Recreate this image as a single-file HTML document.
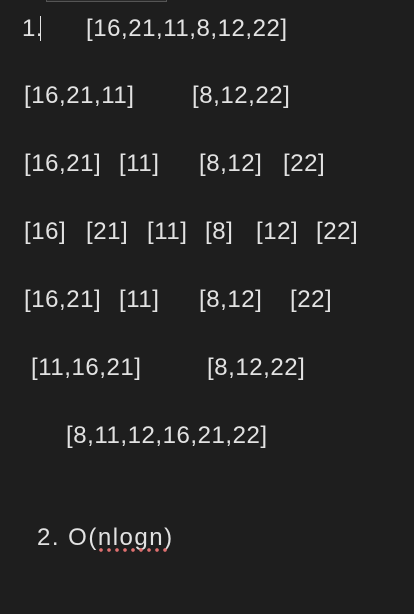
<!DOCTYPE html>
<html><head><style>
html,body{margin:0;padding:0;}
body{width:414px;height:614px;background:#1e1e1e;position:relative;overflow:hidden;font-family:"Liberation Sans",sans-serif;font-size:24px;color:#e2e2e2;}
span{position:absolute;line-height:28px;white-space:nowrap;letter-spacing:0.55px;margin-top:1px;}
.box{position:absolute;left:46px;top:-2px;width:119px;height:3px;border:1px solid #555;border-top:none;background:#2a2a2a;}
.cur{position:absolute;left:40px;top:16px;width:1px;height:25px;background:#e2e2e2;}
.sq{position:absolute;left:97px;top:548px;width:72px;height:4px;background:radial-gradient(circle,#e07070 1.6px,transparent 2px) 0 0/8px 4px repeat-x;}
</style></head><body>
<div class="box"></div>
<span style="left:22px;top:14px">1.</span><div class="cur"></div>
<span style="left:86px;top:14px">[16,21,11,8,12,22]</span>

<span style="left:24px;top:81px">[16,21,11]</span>
<span style="left:192px;top:81px">[8,12,22]</span>

<span style="left:24px;top:149px">[16,21]</span>
<span style="left:119px;top:149px">[11]</span>
<span style="left:199px;top:149px">[8,12]</span>
<span style="left:283px;top:149px">[22]</span>

<span style="left:24px;top:217px">[16]</span>
<span style="left:86px;top:217px">[21]</span>
<span style="left:147px;top:217px">[11]</span>
<span style="left:205px;top:217px">[8]</span>
<span style="left:256px;top:217px">[12]</span>
<span style="left:316px;top:217px">[22]</span>

<span style="left:24px;top:285px">[16,21]</span>
<span style="left:119px;top:285px">[11]</span>
<span style="left:199px;top:285px">[8,12]</span>
<span style="left:290px;top:285px">[22]</span>

<span style="left:31px;top:353px">[11,16,21]</span>
<span style="left:207px;top:353px">[8,12,22]</span>

<span style="left:66px;top:421px">[8,11,12,16,21,22]</span>

<span style="left:37px;top:523px;letter-spacing:1.5px">2. O(nlogn)</span>
<div class="sq"></div>
</body></html>
